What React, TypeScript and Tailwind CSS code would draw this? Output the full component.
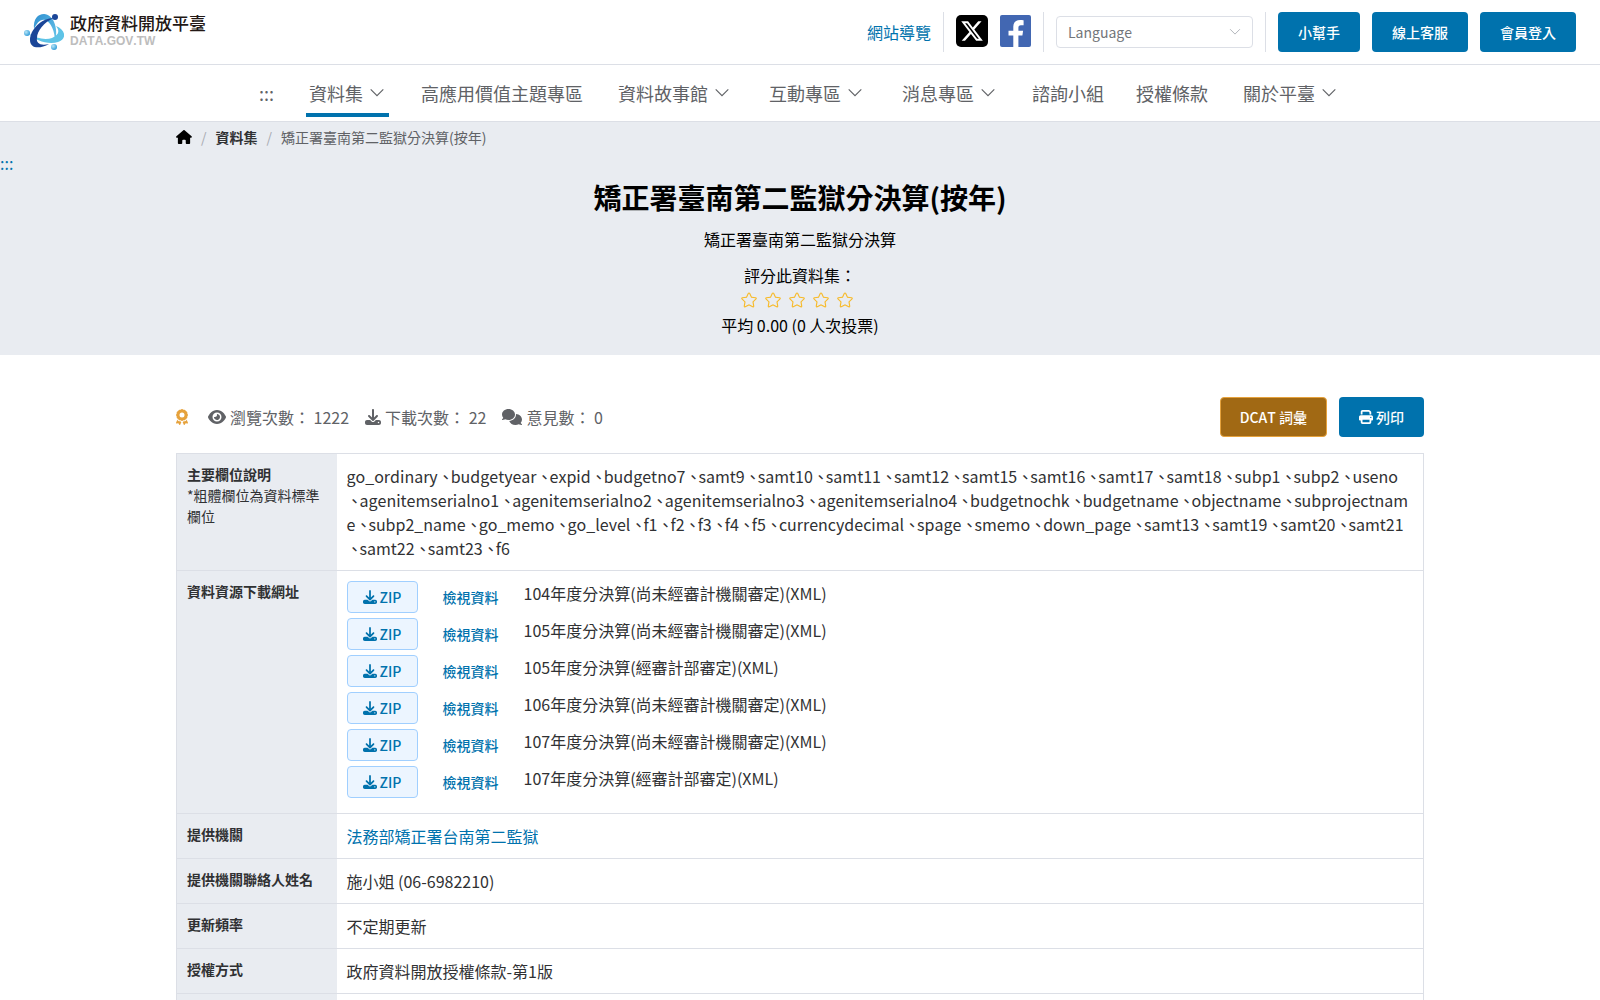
import { Fragment } from "react";
import {
  FaAward,
  FaComments,
  FaDownload,
  FaEye,
  FaHouse,
  FaPrint,
  FaXTwitter,
} from "react-icons/fa6";

const fields = [
  "go_ordinary", "budgetyear", "expid", "budgetno7", "samt9", "samt10", "samt11", "samt12",
  "samt15", "samt16", "samt17", "samt18", "subp1", "subp2", "useno", "agenitemserialno1",
  "agenitemserialno2", "agenitemserialno3", "agenitemserialno4", "budgetnochk", "budgetname",
  "objectname", "subprojectname", "subp2_name", "go_memo", "go_level", "f1", "f2", "f3", "f4",
  "f5", "currencydecimal", "spage", "smemo", "down_page", "samt13", "samt19", "samt20",
  "samt21", "samt22", "samt23", "f6",
];

const navItems = [
  { label: "資料集", menu: true, active: true },
  { label: "高應用價值主題專區" },
  { label: "資料故事館", menu: true },
  { label: "互動專區", menu: true },
  { label: "消息專區", menu: true },
  { label: "諮詢小組" },
  { label: "授權條款" },
  { label: "關於平臺", menu: true },
];

const resources = [
  "104年度分決算(尚未經審計機關審定)(XML)",
  "105年度分決算(尚未經審計機關審定)(XML)",
  "105年度分決算(經審計部審定)(XML)",
  "106年度分決算(尚未經審計機關審定)(XML)",
  "107年度分決算(尚未經審計機關審定)(XML)",
  "107年度分決算(經審計部審定)(XML)",
];

const details = [
  { label: "提供機關", value: "法務部矯正署台南第二監獄", link: true },
  { label: "提供機關聯絡人姓名", value: "施小姐 (06-6982210)" },
  { label: "更新頻率", value: "不定期更新" },
  { label: "授權方式", value: "政府資料開放授權條款-第1版" },
];

function ArrowDown({ className }: { className: string }) {
  return (
    <svg viewBox="0 0 16 16" className={className} fill="none" stroke="currentColor" aria-hidden="true">
      <path d="M2.4 4.8 8 10.4l5.6-5.6" />
    </svg>
  );
}

function Star() {
  return (
    <svg viewBox="0 0 1024 1024" className="size-[18px]" fill="#f7ba2a" aria-hidden="true">
      <path d="m512 747.84 228.16 119.936a6.4 6.4 0 0 0 9.28-6.72l-43.52-254.08 184.512-179.904a6.4 6.4 0 0 0-3.52-10.88l-255.104-37.12L517.76 147.904a6.4 6.4 0 0 0-11.52 0L392.192 379.072l-255.104 37.12a6.4 6.4 0 0 0-3.52 10.88L318.08 606.976l-43.584 254.08a6.4 6.4 0 0 0 9.28 6.72zM313.6 924.48a70.4 70.4 0 0 1-102.144-74.24l37.888-220.928L88.96 472.96A70.4 70.4 0 0 1 128 352.896l221.76-32.256 99.2-200.96a70.4 70.4 0 0 1 126.208 0l99.2 200.96 221.824 32.256a70.4 70.4 0 0 1 39.04 120.064L774.72 629.376l37.888 220.928a70.4 70.4 0 0 1-102.144 74.24L512 820.096l-198.4 104.32z" />
    </svg>
  );
}

function LogoMark() {
  return (
    <svg viewBox="0 0 40 38" className="h-[38px] w-10" fill="none" aria-hidden="true">
      <defs>
        <linearGradient id="arcTop" x1="0" y1="0" x2="1" y2="1">
          <stop offset="0" stopColor="#2f8fd0" />
          <stop offset="1" stopColor="#69c7ea" />
        </linearGradient>
        <radialGradient id="ball" cx=".35" cy=".35" r=".7">
          <stop offset="0" stopColor="#b8e6f7" />
          <stop offset="1" stopColor="#2f9bd8" />
        </radialGradient>
      </defs>
      <path d="M10 16C9 6 14 1 20 1C29 1 35 15 31 29C31 18 27 9 21 7C16 6 13 10 10 16Z" fill="url(#arcTop)" />
      <path d="M4 20C12 26 22 27 28 25C35 22 36 18 32 13C42 17 43 26 34 29C25 32 11 28 4 20Z" fill="#5ec3e6" />
      <path d="M30 5C17 5 6 17 6 27C6 36 16 36 25 31C16 33 12 30 13 25C13 18 20 9 30 5Z" fill="#1b4698" />
      <circle cx="31" cy="4" r="3" fill="#1b4698" />
      <circle cx="3" cy="20" r="3" fill="url(#ball)" />
      <circle cx="30" cy="34" r="3" fill="url(#ball)" />
    </svg>
  );
}

function FacebookLogo() {
  return (
    <svg viewBox="0 0 31 32" className="h-8 w-[31px]" aria-hidden="true">
      <rect width="31" height="32" rx="2" fill="#4267b2" />
      <path
        fill="#fff"
        d="M18.4 32V20.6h4l.7-4.9h-4.7v-3c0-1.500.6-2.400 2.500-2.400h2.700V5.200c-.7-.1-2-.2-3.500-.2-4 0-6.800 2.300-6.800 6.500v4.200H8.500v4.900h4.800V32h5.100Z"
      />
    </svg>
  );
}

export default function App() {
  return (
    <div className="h-screen overflow-hidden bg-white font-['Noto_Sans_CJK_TC',sans-serif] text-base leading-6 text-[#303133] [font-kerning:none]">
      <header>
        {/* Top bar */}
        <div className="flex h-[65px] items-center justify-between border-b border-[#dcdfe6] px-6">
          <a href="#" className="flex items-center gap-[6px]">
            <LogoMark />
            <span className="flex flex-col gap-[2px] pb-1">
              <span className="text-[17px] leading-5 font-medium text-[#231815]">政府資料開放平臺</span>
              <span className="font-['Liberation_Sans',sans-serif] text-[12px] leading-3 font-bold text-[#bdbdbd]">DATA.GOV.TW</span>
            </span>
          </a>
          <div className="flex items-center gap-3">
            <a href="#" className="text-[#0072ad]">網站導覽</a>
            <span className="h-10 w-px bg-[#dcdfe6]" />
            <a href="#" aria-label="X" className="mb-[2px] flex size-8 items-center justify-center rounded-[5px] bg-black text-white">
              <FaXTwitter className="size-6" />
            </a>
            <a href="#" aria-label="Facebook" className="mb-[2px]"><FacebookLogo /></a>
            <span className="h-10 w-px bg-[#dcdfe6]" />
            <div className="relative">
              <select
                aria-label="Language"
                className="block h-8 w-[197px] appearance-none rounded border border-[#dcdfe6] bg-white px-[11px] text-sm text-[#73767a]"
              >
                <option>Language</option>
              </select>
              <ArrowDown className="pointer-events-none absolute top-[9px] right-[11px] size-[14px] text-[#a8abb2]" />
            </div>
            <span className="h-10 w-px bg-[#dcdfe6]" />
            {["小幫手", "線上客服", "會員登入"].map((label) => (
              <button key={label} className="h-10 rounded bg-[#0072ad] px-5 text-sm font-medium text-white">
                {label}
              </button>
            ))}
          </div>
        </div>

        {/* Navigation */}
        <nav className="flex h-[57px] items-center justify-center gap-8 border-b border-[#dcdfe6] text-lg text-[#606266]">
          <a href="#">:::</a>
          {navItems.map((item) => (
            <a
              key={item.label}
              href="#"
              className={
                item.active
                  ? "flex h-12 items-center gap-[5px] border-y-4 border-t-transparent border-b-[#0072ad] px-[3px]"
                  : item.menu
                    ? "flex items-center gap-[5px] px-[3px]"
                    : "flex items-center"
              }
            >
              {item.label}
              {item.menu && <ArrowDown className="size-[18px]" />}
            </a>
          ))}
        </nav>
      </header>

      {/* Title */}
      <section className="bg-[#e9ecf1] text-black">
        <nav className="mx-auto flex h-[29px] max-w-[1248px] items-center text-sm text-[#606266]">
          <a href="#" aria-label="首頁" className="text-black"><FaHouse className="h-[14px] w-4" /></a>
          <span className="mx-[9px] text-[#a8abb2]">/</span>
          <a href="#" className="font-bold text-[#303133]">資料集</a>
          <span className="mx-[9px] text-[#a8abb2]">/</span>
          <span>矯正署臺南第二監獄分決算(按年)</span>
        </nav>
        <a href="#" className="block h-6 text-[#0072ad]">:::</a>
        <div className="flex flex-col items-center pb-[18px]">
          <h1 className="text-[28px] leading-[44px] font-bold">矯正署臺南第二監獄分決算(按年)</h1>
          <p className="mt-2">矯正署臺南第二監獄分決算</p>
          <p className="mt-3">評分此資料集：</p>
          <div className="flex h-[26px] items-center gap-[6px] pr-[6px]">
            {[1, 2, 3, 4, 5].map((n) => (
              <button key={n} aria-label={`${n}`}><Star /></button>
            ))}
          </div>
          <p>平均 0.00 (0 人次投票)</p>
        </div>
      </section>

      <main className="mx-auto max-w-[1248px] pt-[42px]">
        <div className="mb-4 flex items-center text-[#606266]">
          <FaAward className="mr-5 h-4 w-3 text-[#e6a23c]" />
          <div className="flex flex-1 gap-4">
            <span className="flex items-center gap-1"><FaEye className="h-4 w-[18px]" />瀏覽次數： 1222</span>
            <span className="flex items-center gap-1"><FaDownload />下載次數： 22</span>
            <span className="flex items-center gap-1"><FaComments className="h-4 w-5" />意見數： 0</span>
          </div>
          <button className="mr-3 h-10 rounded border border-[#e6a23c] bg-[#a16914] px-[19px] text-sm font-medium text-white">
            DCAT 詞彙
          </button>
          <button className="flex h-10 items-center gap-[3px] rounded bg-[#0072ad] px-5 text-sm font-medium text-white">
            <FaPrint />列印
          </button>
        </div>

        <table className="w-full border-collapse border border-[#dcdfe6]">
          <tbody>
            <tr className="border-b border-[#dcdfe6]">
              <th className="w-40 bg-[#e9ecf1] p-[10px] text-left align-top text-sm leading-[21px] font-bold">
                主要欄位說明
                <span className="block font-normal">*粗體欄位為資料標準欄位</span>
              </th>
              <td className="p-[10px] align-top break-all [line-break:anywhere]">
                {fields.map((field, i) => (
                  <Fragment key={field}>
                    {i > 0 && <span className="-mr-[3px]">、</span>}
                    <span>{field}</span>
                  </Fragment>
                ))}
              </td>
            </tr>
            <tr className="border-b border-[#dcdfe6]">
              <th className="w-40 bg-[#e9ecf1] p-[10px] text-left align-top text-sm leading-[21px] font-bold">資料資源下載網址</th>
              <td className="px-[10px] pt-[10px] pb-[15px] align-top">
                <ul className="flex flex-col gap-[5px]">
                  {resources.map((name) => (
                    <li key={name} className="flex h-8">
                      <button className="flex h-8 w-[71px] items-center justify-center gap-[3px] rounded border border-[#a0cfff] bg-[#ecf5ff] text-sm font-medium text-[#0072ad]">
                        <FaDownload />ZIP
                      </button>
                      <button className="mx-[25px] text-sm font-medium text-[#0072ad]">檢視資料</button>
                      <span>{name}</span>
                    </li>
                  ))}
                </ul>
              </td>
            </tr>
            {details.map((row) => (
              <tr key={row.label} className="border-b border-[#dcdfe6]">
                <th className="w-40 bg-[#e9ecf1] p-[10px] text-left align-top text-sm leading-[21px] font-bold">{row.label}</th>
                <td className="p-[10px] align-top">
                  {row.link ? <a href="#" className="text-[#0072ad]">{row.value}</a> : row.value}
                </td>
              </tr>
            ))}
            <tr>
              <th className="h-11 w-40 bg-[#e9ecf1]" />
              <td />
            </tr>
          </tbody>
        </table>
      </main>
    </div>
  );
}
